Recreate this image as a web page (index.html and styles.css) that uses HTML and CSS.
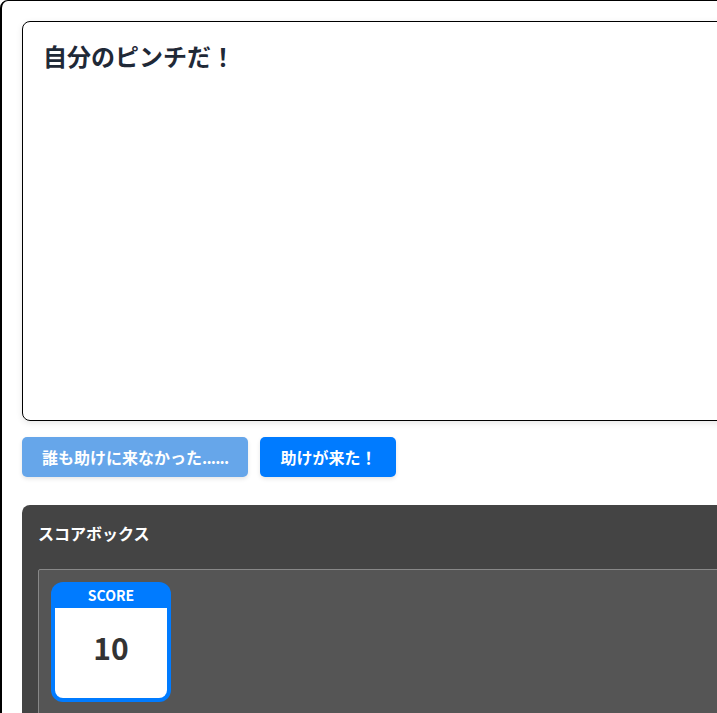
FILE: index.html
```html
<!DOCTYPE html>
<html lang="ja">
<head>
  <meta charset="UTF-8" />
  <meta name="viewport" content="width=device-width, initial-scale=1.0"/>
  <title>ピンチ</title>
  <link rel="stylesheet" href="styles.css">
</head>
<body>

  <div class="app">
    <!-- Scene -->
    <div class="scene">
      <h2 class="scene-title">自分のピンチだ！</h2>
    </div>

    <div class="button-row">
      <button class="btn btn-faded">誰も助けに来なかった<span class="dots">......</span></button>
      <button class="btn">助けが来た！</button>
    </div>

    <!-- Score box -->
    <div class="score-panel">
      <h3>スコアボックス</h3>
      <div class="score-area">
        <div class="score-card">
          <div class="score-label">SCORE</div>
          <div class="score-value">10</div>
        </div>
      </div>
    </div>
  </div>

</body>
</html>
```

FILE: styles.css
```css
html, body {
  overflow: hidden;
}

body {
  margin: 0;
  font-family: "Noto Sans CJK JP", "Noto Sans", sans-serif;
  background: #fff;
  color: #1f2937;
}

.app {
  width: 1000px;
  min-height: 900px;
  box-sizing: border-box;
  padding: 20px;
  border: 2px solid #000;
  border-top-width: 1px;
  border-radius: 8px;
}

.scene {
  height: 400px;
  box-sizing: border-box;
  padding: 16px 20px;
  border: 1px solid #000;
  border-radius: 8px;
  box-shadow: 0 2px 6px rgba(0, 0, 0, 0.1);
}

.scene-title {
  margin: 0;
  font-size: 24px;
  line-height: 36px;
  font-weight: bold;
  color: #1f2937;
}

.button-row {
  display: flex;
  gap: 12px;
  margin-top: 16px;
}

.btn {
  height: 40px;
  padding: 0 20px;
  font-family: inherit;
  font-size: 16px;
  font-weight: bold;
  color: #fff;
  background-color: #007bff;
  border: none;
  border-radius: 5px;
  box-shadow: 0 2px 4px rgba(0, 0, 0, 0.1);
  cursor: pointer;
}

.btn-faded {
  background-color: #66a6ea;
}

.btn .dots {
  letter-spacing: -0.8px;
}

.score-panel {
  margin-top: 28px;
  padding: 16px 16px 20px;
  background-color: #444;
  border-radius: 8px;
  color: #fff;
}

.score-panel h3 {
  margin: 0 0 24px;
  font-size: 16px;
  line-height: 24px;
}

.score-area {
  display: flex;
  padding: 12px;
  min-height: 200px;
  background-color: #555;
  border: 1px solid #888;
  border-radius: 2px;
}

.score-card {
  width: 120px;
  height: 120px;
  box-sizing: border-box;
  padding: 0 4px 4px;
  display: flex;
  flex-direction: column;
  background-color: #007bff;
  border-radius: 12px;
}

.score-label {
  height: 26px;
  line-height: 26px;
  text-align: center;
  font-size: 14px;
  font-weight: bold;
  color: #fff;
}

.score-value {
  flex: 1;
  display: flex;
  align-items: center;
  justify-content: center;
  padding-bottom: 12px;
  background: #fff;
  border-radius: 0 0 8px 8px;
  font-size: 30px;
  font-weight: bold;
  color: #333;
}
```
